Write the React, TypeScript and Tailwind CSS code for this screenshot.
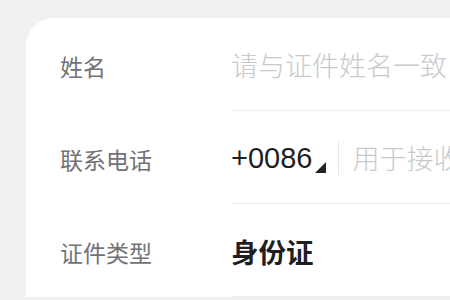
import React from 'react';

const cjk = { fontFamily: '"Noto Sans CJK SC", "Noto Sans", sans-serif' };

// One form row: label on the left, field with bottom rule on the right
const Row = ({ label, children }: { label: string; children: React.ReactNode }) => (
  <div className="flex h-[93px]">
    <div className="w-[171px] shrink-0 flex items-center pt-[3px] text-[23px] text-[#727276]">{label}</div>
    <div className="flex-1 flex items-center pt-[3px] border-b border-[#ececee]">{children}</div>
  </div>
);

export default function App() {
  return (
    <div className="w-[450px] h-[300px] overflow-hidden bg-[#f0f1f3] pl-[26px] pt-[18px]" style={cjk}>
      <div className="w-[620px] bg-white rounded-tl-[28px] pl-[34px]">
        <Row label="姓名">
          <span className="text-[27px] font-light text-[#c9c9cc] whitespace-nowrap">请与证件姓名一致</span>
        </Row>
        <Row label="联系电话">
          <div className="flex items-center whitespace-nowrap">
            <span className="text-[29px] text-[#1f1f1f] leading-none" style={{ fontFamily: '"Liberation Sans", Arial, sans-serif' }}>
              +0086
            </span>
            <svg width="11" height="11" viewBox="0 0 11 11" className="ml-[3px] mt-[18px]">
              <path d="M11 0 L11 11 L0 11 Z" fill="#222" />
            </svg>
            <div className="w-px h-[33px] bg-[#e6e6e8] ml-[12px] mr-[13px]" />
            <span className="text-[27px] font-light text-[#c9c9cc]">用于接收通知短信</span>
          </div>
        </Row>
        <Row label="证件类型">
          <span className="text-[27.5px] font-bold text-[#1f1f1f]">身份证</span>
        </Row>
      </div>
    </div>
  );
}
